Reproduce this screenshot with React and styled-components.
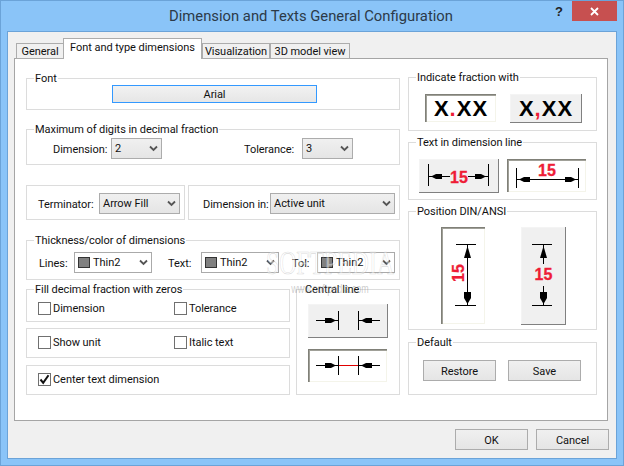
import React from "react";
import styled, { createGlobalStyle } from "styled-components";

const Global = createGlobalStyle`
  html, body { margin: 0; padding: 0; background: #8ac4f8; }
  * { box-sizing: border-box; }
`;

const Win = styled.div`
  position: relative;
  width: 624px;
  height: 466px;
  overflow: hidden;
  background: #8ac4f8;
  border: 1px solid #6ba3d8;
  font-family: Roboto, "Noto Sans", sans-serif;
  font-size: 11px;
  letter-spacing: -0.05px;
  color: #111;
  display: flex;
  flex-direction: column;
`;
const TitleBar = styled.div`
  height: 30px;
  flex: none;
  position: relative;
  display: flex;
  align-items: center;
  justify-content: center;
  font-size: 14.8px;
  letter-spacing: 0;
  color: #2c3a48;
  padding-right: 2px;
`;
const Help = styled.div`
  position: absolute;
  left: 552px;
  top: 3px;
  font: bold 13px "Liberation Sans", sans-serif;
  color: #222;
  width: 12px;
  text-align: center;
`;
const Close = styled.div`
  position: absolute;
  left: 571px;
  top: 0;
  width: 45px;
  height: 20px;
  background: #c75050;
  display: flex;
  align-items: center;
  justify-content: center;
`;
const Client = styled.div`
  flex: none;
  margin-left: 6px;
  width: 610px;
  height: 428px;
  background: #f0f0f0;
  border: 1px solid #6ba3d8;
  padding: 0 0 0 6px;
  display: flex;
  flex-direction: column;
`;
const TabBar = styled.div`
  height: 27px;
  flex: none;
  display: flex;
  align-items: flex-end;
  padding-left: 2px;
  position: relative;
  z-index: 1;
  margin-bottom: -1px;
`;
const Tab = styled.div`
  height: ${(p) => (p.$active ? 21 : 16)}px;
  width: ${(p) => p.$w}px;
  display: flex;
  align-items: center;
  justify-content: center;
  background: ${(p) => (p.$active ? "#fff" : "#f0f0f0")};
  border: 1px solid #acacac;
  border-bottom: ${(p) => (p.$active ? "none" : "1px solid #acacac")};
  margin-left: ${(p) => (p.$active ? "-1px" : "0")};
  padding-bottom: ${(p) => (p.$active ? 4 : 0)}px;
  white-space: nowrap;
`;
const Panel = styled.div`
  width: 594px;
  height: 363px;
  flex: none;
  background: #fff;
  border: 1px solid #a5a5a5;
  padding: 0 0 0 11px;
  display: flex;
  gap: 8px;
`;
const LeftCol = styled.div`
  width: 374px;
  display: flex;
  flex-direction: column;
`;
const RightCol = styled.div`
  width: 189px;
  display: flex;
  flex-direction: column;
`;
const Group = styled.div`
  position: relative;
  flex: none;
  width: ${(p) => (p.$w ? `${p.$w}px` : "100%")};
  height: ${(p) => p.$h}px;
  margin-top: ${(p) => p.$mt || 0}px;
  border: 1px solid #dcdcdc;
`;
const Legend = styled.span`
  position: absolute;
  left: 7px;
  top: -7px;
  background: #fff;
  padding: 0 1px;
  line-height: 14px;
  white-space: nowrap;
`;
const HRow = styled.div`
  display: flex;
  gap: ${(p) => p.$gap ?? 4}px;
  margin-top: ${(p) => p.$mt || 0}px;
`;
const Row = styled.div`
  display: flex;
  align-items: center;
  margin-left: ${(p) => p.$ml || 0}px;
  margin-top: ${(p) => p.$mt || 0}px;
`;
const Label = styled.span`
  width: ${(p) => p.$w}px;
  margin-left: ${(p) => p.$ml || 0}px;
  padding-top: 2px;
  white-space: nowrap;
  flex: none;
`;
const Sel = styled.div`
  width: ${(p) => p.$w}px;
  height: 21px;
  flex: none;
  display: flex;
  align-items: center;
  justify-content: space-between;
  padding: 0 3px 0 3px;
  margin-left: ${(p) => p.$ml || 0}px;
  border: 1px solid ${(p) => (p.$white ? "#aaa" : "#acacac")};
  background: ${(p) =>
    p.$white ? "#fff" : "linear-gradient(#f0f0f0, #e5e5e5)"};
`;
const SelLeft = styled.span`
  display: flex;
  align-items: center;
  gap: 3px;
`;
const Swatch = styled.span`
  width: 12px;
  height: 11px;
  background: #808080;
  border: 1px solid #333;
`;
const FontBtn = styled.div`
  width: 205px;
  height: 18px;
  margin: 6px 0 0 85px;
  border: 1px solid #3399ff;
  background: linear-gradient(#f2f2f2, #e6e6e6);
  display: flex;
  align-items: center;
  justify-content: center;
`;
const PushBtn = styled.div`
  width: 73px;
  height: 21px;
  padding-top: 1px;
  border: 1px solid #acacac;
  background: linear-gradient(#f0f0f0, #e5e5e5);
  display: flex;
  align-items: center;
  justify-content: center;
`;
const Footer = styled.div`
  display: flex;
  justify-content: flex-end;
  gap: 8px;
  margin-top: 8px;
  padding-right: 7px;
`;
const CheckGrid = styled.div`
  display: grid;
  grid-template-columns: 136px 1fr;
  padding-left: 11px;
  padding-top: ${(p) => p.$pt}px;
`;
const Check = styled.label`
  display: flex;
  align-items: center;
  gap: 2px;
  white-space: nowrap;
`;
const Box = styled.span`
  width: 13px;
  height: 13px;
  border: 1px solid #707070;
  background: #fff;
  display: flex;
  align-items: center;
  justify-content: center;
`;
const ImgBtn = styled.div`
  width: ${(p) => p.$w}px;
  height: ${(p) => p.$h}px;
  flex: none;
  background: ${(p) => (p.$sunken ? "#fff" : "#f0f0f0")};
  box-shadow: ${(p) =>
    p.$sunken
      ? "inset 1px 1px 0 #808078, inset 2px 2px 0 #a0a098, inset -1px -1px 0 #f4f4ea"
      : "inset -1px -1px 0 #808080, inset 1px 1px 0 #f4f4f4"};
  svg { display: block; }
`;
const ImgRow = styled.div`
  display: flex;
  gap: ${(p) => p.$gap || 0}px;
  padding-left: ${(p) => p.$pl || 0}px;
  padding-top: ${(p) => p.$pt || 0}px;
`;
const ImgCol = styled.div`
  display: flex;
  flex-direction: column;
  gap: 11px;
  padding: 14px 0 0 11px;
`;
const Watermark = styled.div`
  position: absolute;
  left: 265px;
  top: 247px;
  font: 33px "Liberation Serif", serif;
  transform: scaleX(0.72);
  transform-origin: left top;
  letter-spacing: 0;
  color: rgba(255, 255, 255, 0.45);
  -webkit-text-stroke: 0.6px rgba(150, 150, 150, 0.35);
  pointer-events: none;
  text-align: center;
  line-height: 30px;
  small {
    display: block;
    font: 12.5px "Liberation Sans", sans-serif;
    -webkit-text-stroke: 0;
    color: rgba(130, 130, 130, 0.4);
    margin-top: 4px;
  }
`;

const Chevron = () => (
  <svg width="9" height="7" viewBox="0 0 9 7">
    <path d="M1 1.5 L4.5 5 L8 1.5" fill="none" stroke="#555" strokeWidth="1.8" />
  </svg>
);

const Select = ({ w, ml, white, swatch, children }) => (
  <Sel $w={w} $ml={ml} $white={white}>
    <SelLeft>
      {swatch && <Swatch />}
      {children}
    </SelLeft>
    <Chevron />
  </Sel>
);

const CheckItem = ({ checked, children }) => (
  <Check>
    <Box>
      {checked && (
        <svg width="11" height="11" viewBox="0 0 11 11">
          <path d="M1.5 5.5 L4.2 8.8 L9.5 1.2" fill="none" stroke="#111" strokeWidth="2" />
        </svg>
      )}
    </Box>
    {children}
  </Check>
);

/* filled arrows: x,y is the tip; a taper ending in a flat short block */
const ArrowR = ({ x, y }) => (
  <polygon points={`${x - 11},${y - 2.5} ${x - 5},${y - 2.5} ${x},${y} ${x - 5},${y + 2.5} ${x - 11},${y + 2.5}`} />
);
const ArrowL = ({ x, y }) => (
  <polygon points={`${x + 11},${y - 2.5} ${x + 5},${y - 2.5} ${x},${y} ${x + 5},${y + 2.5} ${x + 11},${y + 2.5}`} />
);
const ArrowD = ({ x, y }) => (
  <polygon points={`${x - 3.5},${y - 12} ${x + 3.5},${y - 12} ${x + 3.5},${y - 6} ${x},${y} ${x - 3.5},${y - 6}`} />
);
const ArrowU = ({ x, y }) => (
  <polygon points={`${x - 3.5},${y + 12} ${x + 3.5},${y + 12} ${x},${y}`} />
);

const Red = styled.text`
  font: bold 16px "Liberation Sans", sans-serif;
  letter-spacing: 0;
  fill: #ee1c36;
  stroke: #ee1c36;
  stroke-width: 0.3px;
  text-anchor: middle;
`;
const Big = styled.text`
  font: bold 22px "Liberation Sans", sans-serif;
  fill: #000;
  letter-spacing: 1px;
  text-anchor: middle;
`;

const Pic = ({ w, h, children }) => (
  <svg width={w} height={h} viewBox={`0 0 ${w} ${h}`}>
    {children}
  </svg>
);

const Tick = ({ x1, y1, x2, y2, c }) => (
  <line x1={x1} y1={y1} x2={x2} y2={y2} stroke={c || "#000"} strokeWidth="1" />
);

export default function App() {
  return (
    <Win>
      <Global />
      <TitleBar>
        Dimension and Texts General Configuration
        <Help>?</Help>
        <Close>
          <svg width="9" height="9" viewBox="0 0 9 9">
            <path d="M1 1 L8 8 M8 1 L1 8" stroke="#fff" strokeWidth="1.8" />
          </svg>
        </Close>
      </TitleBar>
      <Client>
        <TabBar>
          <Tab $w={48}>General</Tab>
          <Tab $w={139} $active>Font and type dimensions</Tab>
          <Tab $w={68}>Visualization</Tab>
          <Tab $w={80}>3D model view</Tab>
        </TabBar>
        <Panel>
          <LeftCol>
            <Group $h={32} $mt={19}>
              <Legend>Font</Legend>
              <FontBtn>Arial</FontBtn>
            </Group>
            <Group $h={36} $mt={19}>
              <Legend>Maximum of digits in decimal fraction</Legend>
              <Row $mt={8} $ml={26}>
                <Label $w={58}>Dimension:</Label>
                <Select w={51}>2</Select>
                <Label $w={58} $ml={82}>Tolerance:</Label>
                <Select w={51}>3</Select>
              </Row>
            </Group>
            <HRow $mt={20} $gap={3}>
              <Group $w={159} $h={35}>
                <Row $mt={7} $ml={11}>
                  <Label $w={61}>Terminator:</Label>
                  <Select w={81}>Arrow Fill</Select>
                </Row>
              </Group>
              <Group $w={212} $h={35}>
                <Row $mt={7} $ml={14}>
                  <Label $w={67}>Dimension in:</Label>
                  <Select w={125}>Active unit</Select>
                </Row>
              </Group>
            </HRow>
            <Group $h={40} $mt={20}>
              <Legend>Thickness/color of dimensions</Legend>
              <Row $mt={11} $ml={12}>
                <Label $w={35}>Lines:</Label>
                <Select w={78} white swatch>Thin2</Select>
                <Label $w={33} $ml={16}>Text:</Label>
                <Select w={78} white swatch>Thin2</Select>
                <Label $w={25} $ml={13}>Tol:</Label>
                <Select w={78} white swatch>Thin2</Select>
              </Row>
            </Group>
            <HRow $mt={9} $gap={6}>
              <div>
                <Group $w={264} $h={33}>
                  <Legend>Fill decimal fraction with zeros</Legend>
                  <CheckGrid $pt={12}>
                    <CheckItem>Dimension</CheckItem>
                    <CheckItem>Tolerance</CheckItem>
                  </CheckGrid>
                </Group>
                <Group $w={264} $h={30} $mt={6}>
                  <CheckGrid $pt={7}>
                    <CheckItem>Show unit</CheckItem>
                    <CheckItem>Italic text</CheckItem>
                  </CheckGrid>
                </Group>
                <Group $w={264} $h={30} $mt={7}>
                  <CheckGrid $pt={7}>
                    <CheckItem checked>Center text dimension</CheckItem>
                  </CheckGrid>
                </Group>
              </div>
              <Group $w={104} $h={106}>
                <Legend>Central line</Legend>
                <ImgCol>
                  <ImgBtn $w={80} $h={34}>
                    <Pic w={80} h={34}>
                      <Tick x1={8} y1={16.5} x2={30} y2={16.5} />
                      <ArrowR x={28} y={16.5} />
                      <Tick x1={30.5} y1={7} x2={30.5} y2={26} />
                      <Tick x1={50.5} y1={7} x2={50.5} y2={26} />
                      <ArrowL x={53} y={16.5} />
                      <Tick x1={51} y1={16.5} x2={72} y2={16.5} />
                    </Pic>
                  </ImgBtn>
                  <ImgBtn $w={79} $h={33} $sunken>
                    <Pic w={79} h={33}>
                      <Tick x1={8} y1={16.5} x2={30} y2={16.5} />
                      <ArrowR x={28} y={16.5} />
                      <Tick x1={30} y1={16.5} x2={50} y2={16.5} c="#e00000" />
                      <Tick x1={30.5} y1={7} x2={30.5} y2={26} />
                      <Tick x1={50.5} y1={7} x2={50.5} y2={26} />
                      <ArrowL x={53} y={16.5} />
                      <Tick x1={51} y1={16.5} x2={72} y2={16.5} />
                    </Pic>
                  </ImgBtn>
                </ImgCol>
              </Group>
            </HRow>
          </LeftCol>
          <RightCol>
            <Group $h={54} $mt={18}>
              <Legend>Indicate fraction with</Legend>
              <ImgRow $pl={16} $pt={16} $gap={14}>
                <ImgBtn $w={71} $h={28} $sunken>
                  <Pic w={71} h={28}>
                    <Big x={36} y={22}>X<tspan fill="#ee1c36">.</tspan>XX</Big>
                  </Pic>
                </ImgBtn>
                <ImgBtn $w={72} $h={29}>
                  <Pic w={72} h={29}>
                    <Big x={36} y={22}>X<tspan fill="#ee1c36">,</tspan>XX</Big>
                  </Pic>
                </ImgBtn>
              </ImgRow>
            </Group>
            <Group $h={58} $mt={11}>
              <Legend>Text in dimension line</Legend>
              <ImgRow $pl={10} $pt={16} $gap={8}>
                <ImgBtn $w={80} $h={34}>
                  <Pic w={80} h={34}>
                    <Tick x1={9.5} y1={5} x2={9.5} y2={27} />
                    <Tick x1={69.5} y1={5} x2={69.5} y2={27} />
                    <Tick x1={10} y1={17.5} x2={31} y2={17.5} />
                    <Tick x1={49} y1={17.5} x2={69} y2={17.5} />
                    <ArrowL x={12} y={17.5} />
                    <ArrowR x={67} y={17.5} />
                    <Red x={40} y={23.5}>15</Red>
                  </Pic>
                </ImgBtn>
                <ImgBtn $w={79} $h={33} $sunken>
                  <Pic w={79} h={33}>
                    <Tick x1={9.5} y1={9} x2={9.5} y2={29} />
                    <Tick x1={71.5} y1={9} x2={71.5} y2={29} />
                    <Tick x1={10} y1={20.5} x2={71} y2={20.5} />
                    <ArrowL x={12} y={20.5} />
                    <ArrowR x={69} y={20.5} />
                    <Red x={40} y={17}>15</Red>
                  </Pic>
                </ImgBtn>
              </ImgRow>
            </Group>
            <Group $h={119} $mt={11}>
              <Legend>Position DIN/ANSI</Legend>
              <ImgRow $pl={32} $pt={15} $gap={36}>
                <ImgBtn $w={44} $h={97} $sunken>
                  <Pic w={44} h={97}>
                    <Tick x1={15} y1={17.5} x2={35} y2={17.5} />
                    <Tick x1={14} y1={78.5} x2={35} y2={78.5} />
                    <Tick x1={26.5} y1={18} x2={26.5} y2={78} />
                    <ArrowU x={26.5} y={19} />
                    <ArrowD x={26.5} y={77} />
                    <Red x={0} y={0} transform="translate(22.5 46) rotate(-90)">15</Red>
                  </Pic>
                </ImgBtn>
                <ImgBtn $w={45} $h={98}>
                  <Pic w={45} h={98}>
                    <Tick x1={11} y1={17.5} x2={31} y2={17.5} />
                    <Tick x1={11} y1={78.5} x2={31} y2={78.5} />
                    <Tick x1={22.5} y1={18} x2={22.5} y2={37} />
                    <Tick x1={22.5} y1={59} x2={22.5} y2={78} />
                    <ArrowU x={22.5} y={19} />
                    <ArrowD x={22.5} y={77} />
                    <Red x={22.5} y={53}>15</Red>
                  </Pic>
                </ImgBtn>
              </ImgRow>
            </Group>
            <Group $h={53} $mt={12}>
              <Legend>Default</Legend>
              <ImgRow $pl={14} $pt={17} $gap={12}>
                <PushBtn>Restore</PushBtn>
                <PushBtn>Save</PushBtn>
              </ImgRow>
            </Group>
          </RightCol>
        </Panel>
        <Footer>
          <PushBtn>OK</PushBtn>
          <PushBtn>Cancel</PushBtn>
        </Footer>
      </Client>
      <Watermark>
        SOFTPEDIA
        <small>www.softpedia.com</small>
      </Watermark>
    </Win>
  );
}
